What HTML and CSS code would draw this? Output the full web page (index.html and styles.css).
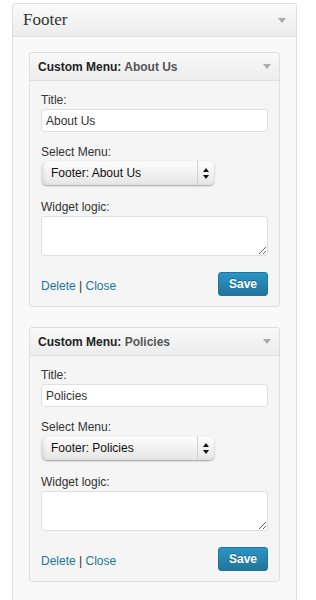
FILE: index.html
```html
<!DOCTYPE html>
<html lang="en">
<head>
    <meta charset="UTF-8">
    <meta name="viewport" content="width=device-width, initial-scale=1.0">
    <title>Widgets - Footer</title>
    <link rel="stylesheet" href="styles.css">
</head>
<body>

    <div class="sidebar">
        <div class="sidebar-head">
            <h3>Footer</h3>
            <span class="arrow"></span>
        </div>
        <div class="sidebar-body">

            <div class="widget">
                <div class="widget-top">
                    <h4>Custom Menu: <span class="in-title">About Us</span></h4>
                    <span class="arrow"></span>
                </div>
                <div class="widget-inside">
                    <div class="field">
                        <label>Title:</label>
                        <input type="text" class="text-input" value="About Us">
                    </div>
                    <div class="field field-select">
                        <label>Select Menu:</label>
                        <div class="select-wrap">
                            <select class="menu-select"><option>Footer: About Us</option></select>
                            <span class="select-btn">
                                <svg width="6" height="11" viewBox="0 0 6 11"><path d="M3 0L6 4H0z M3 11L0 7h6z" fill="#111"/></svg>
                            </span>
                        </div>
                    </div>
                    <div class="field">
                        <label>Widget logic:</label>
                        <textarea class="logic"></textarea>
                    </div>
                    <div class="widget-actions">
                        <div class="links"><a href="#">Delete</a> | <a href="#">Close</a></div>
                        <button class="save">Save</button>
                    </div>
                </div>
            </div>

            <div class="widget">
                <div class="widget-top">
                    <h4>Custom Menu: <span class="in-title">Policies</span></h4>
                    <span class="arrow"></span>
                </div>
                <div class="widget-inside">
                    <div class="field">
                        <label>Title:</label>
                        <input type="text" class="text-input" value="Policies">
                    </div>
                    <div class="field field-select">
                        <label>Select Menu:</label>
                        <div class="select-wrap">
                            <select class="menu-select"><option>Footer: Policies</option></select>
                            <span class="select-btn">
                                <svg width="6" height="11" viewBox="0 0 6 11"><path d="M3 0L6 4H0z M3 11L0 7h6z" fill="#111"/></svg>
                            </span>
                        </div>
                    </div>
                    <div class="field">
                        <label>Widget logic:</label>
                        <textarea class="logic"></textarea>
                    </div>
                    <div class="widget-actions">
                        <div class="links"><a href="#">Delete</a> | <a href="#">Close</a></div>
                        <button class="save">Save</button>
                    </div>
                </div>
            </div>

        </div>
    </div>

</body>
</html>
```

FILE: styles.css
```css
body {
    margin: 0;
    background-color: #fff;
    font-family: "Liberation Sans", Arial, sans-serif;
    font-size: 12px;
    color: #333;
}
/* Outer sidebar box */
.sidebar {
    margin: 3px 0 0 12px;
    width: 283px;
    border: 1px solid #dfdfdf;
    border-radius: 3px 3px 0 0;
    background-color: #f9f9f9;
}
.sidebar-head {
    height: 32px;
    display: flex;
    align-items: center;
    justify-content: space-between;
    padding: 0 10px;
    border-bottom: 1px solid #dfdfdf;
    background: linear-gradient(#fafafa, #ececec);
}
.sidebar-head h3 {
    margin: 0;
    font-family: "Liberation Serif", Georgia, serif;
    font-size: 17px;
    font-weight: normal;
    color: #333;
}
.arrow {
    width: 0;
    height: 0;
    border-left: 4px solid transparent;
    border-right: 4px solid transparent;
    border-top: 5px solid #aaa;
}
.sidebar-body {
    padding: 15px 16px 20px;
}
/* Single widget */
.widget {
    border: 1px solid #dfdfdf;
    border-radius: 3px;
    background-color: #f5f5f5;
    margin-bottom: 20px;
}
.widget:last-child {
    margin-bottom: 0;
}
.widget-top {
    height: 27px;
    display: flex;
    align-items: center;
    justify-content: space-between;
    padding: 0 8px;
    border-bottom: 1px solid #dfdfdf;
    background: linear-gradient(#f9f9f9, #ececec);
    border-radius: 3px 3px 0 0;
}
.widget-top h4 {
    margin: 0;
    font-size: 12px;
    font-weight: bold;
    color: #222;
}
.in-title {
    color: #555;
}
.widget-inside {
    padding: 12px 11px 10px;
}
.field {
    margin-bottom: 13px;
}
.field-select {
    margin-bottom: 15px;
}
.field label {
    display: block;
    line-height: 15px;
    margin-bottom: 1px;
    color: #333;
}
.text-input {
    box-sizing: border-box;
    width: 100%;
    height: 23px;
    margin: 0;
    padding: 0 4px;
    border: 1px solid #dfdfdf;
    border-radius: 3px;
    background-color: #fff;
    font-family: inherit;
    font-size: 12px;
    color: #333;
}
/* Mac style select */
.select-wrap {
    position: relative;
    width: 172px;
    height: 24px;
    margin-left: 1px;
}
.menu-select {
    -webkit-appearance: none;
    appearance: none;
    width: 100%;
    height: 24px;
    margin: 0;
    padding: 0 20px 0 9px;
    border: none;
    border-radius: 5px;
    background: linear-gradient(#fefefe, #f1f1f1 50%, #e6e6e6);
    box-shadow: 0 1px 2px rgba(0, 0, 0, 0.35), inset 2px 0 3px rgba(0, 0, 0, 0.08);
    font-family: inherit;
    font-size: 12px;
    color: #111;
}
.select-btn {
    position: absolute;
    top: 0;
    right: 0;
    width: 16px;
    height: 24px;
    border-left: 1px solid #d2d2d2;
    display: flex;
    align-items: center;
    justify-content: center;
    pointer-events: none;
}
.logic {
    display: block;
    box-sizing: border-box;
    width: 100%;
    height: 40px;
    margin: 0;
    border: 1px solid #dfdfdf;
    border-radius: 3px;
    background-color: #fff;
}
.widget-actions {
    margin-top: 16px;
    display: flex;
    align-items: center;
    justify-content: space-between;
}
.links {
    padding-top: 3px;
    font-size: 12px;
    color: #333;
}
.links a {
    color: #21759b;
    text-decoration: none;
}
.save {
    height: 24px;
    padding: 0 10px;
    border: 1px solid #21759b;
    border-radius: 3px;
    background: linear-gradient(#2a95c5, #21759b);
    color: #fff;
    font-family: inherit;
    font-size: 12px;
    font-weight: bold;
    text-shadow: 0 -1px 0 rgba(0, 0, 0, 0.3);
}
```
